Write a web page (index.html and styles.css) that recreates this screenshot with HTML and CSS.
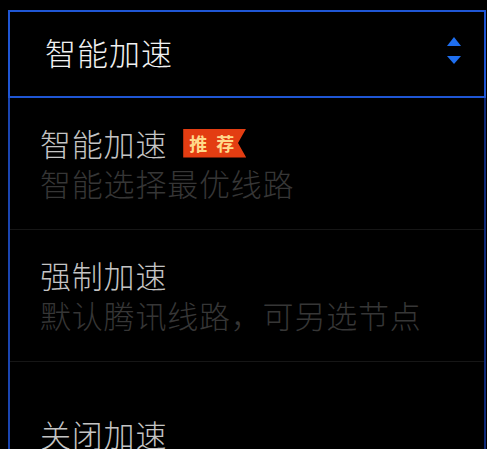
FILE: index.html
```html
<!DOCTYPE html>
<html lang="zh-CN">
<head>
    <meta charset="UTF-8">
    <meta name="viewport" content="width=device-width, initial-scale=1.0">
    <title>加速模式</title>
    <link rel="stylesheet" href="styles.css">
</head>
<body>
    <div class="mode-select">
        <!-- Current mode -->
        <div class="select-head">
            <span class="select-value">智能加速</span>
            <svg class="select-arrows" width="16" height="28" viewBox="0 0 16 28">
                <polygon points="8,0 15,9 1,9" />
                <polygon points="1,19 15,19 8,27" />
            </svg>
        </div>

        <!-- Mode options -->
        <ul class="option-list">
            <li class="option">
                <div class="option-title">智能加速<span class="tag-hot">推荐</span></div>
                <div class="option-desc">智能选择最优线路</div>
            </li>
            <li class="option">
                <div class="option-title">强制加速</div>
                <div class="option-desc">默认腾讯线路，可另选节点</div>
            </li>
            <li class="option option-single">
                <div class="option-title">关闭加速</div>
            </li>
        </ul>
    </div>
</body>
</html>
```

FILE: styles.css
```css
/* General Styles */
body {
    margin: 0;
    padding: 10px 1px 0 8px;
    background-color: #000;
    font-family: "Noto Sans CJK SC", "Noto Sans", sans-serif;
    font-weight: 300;
    overflow: hidden;
}

/* Select box */
.mode-select {
    width: 478px;
}

.select-head {
    display: flex;
    align-items: center;
    justify-content: space-between;
    box-sizing: border-box;
    height: 88px;
    padding: 0 22px 5px 35px;
    border: 2px solid #1f56d4;
    color: #f2f2f2;
    font-size: 31px;
    letter-spacing: 1px;
}

.select-value {
    line-height: 1;
}

.select-arrows {
    fill: #1f6ff0;
    margin-top: -1px;
}

/* Dropdown list */
.option-list {
    list-style: none;
    margin: 0;
    padding: 0;
    border-left: 2px solid #1a45b0;
    border-right: 2px solid #0f2a78;
}

.option {
    box-sizing: border-box;
    height: 132px;
    padding: 25px 0 0 30px;
    border-bottom: 1px solid #161616;
    font-size: 31px;
    letter-spacing: 0.8px;
    line-height: 40px;
}

.option-single {
    padding-top: 52px;
}

.option-title {
    display: flex;
    align-items: center;
    color: #c4c4c4;
}

.option-desc {
    color: #363636;
}

/* "推荐" flag */
.tag-hot {
    display: inline-block;
    margin-left: 16px;
    padding: 0 3px 0 6px;
    height: 29px;
    line-height: 29px;
    font-size: 18px;
    font-weight: bold;
    letter-spacing: 9px;
    color: #ffd98a;
    background-color: #e33d12;
    clip-path: polygon(0 0, 100% 0, 87% 50%, 100% 100%, 0 100%);
}
```
